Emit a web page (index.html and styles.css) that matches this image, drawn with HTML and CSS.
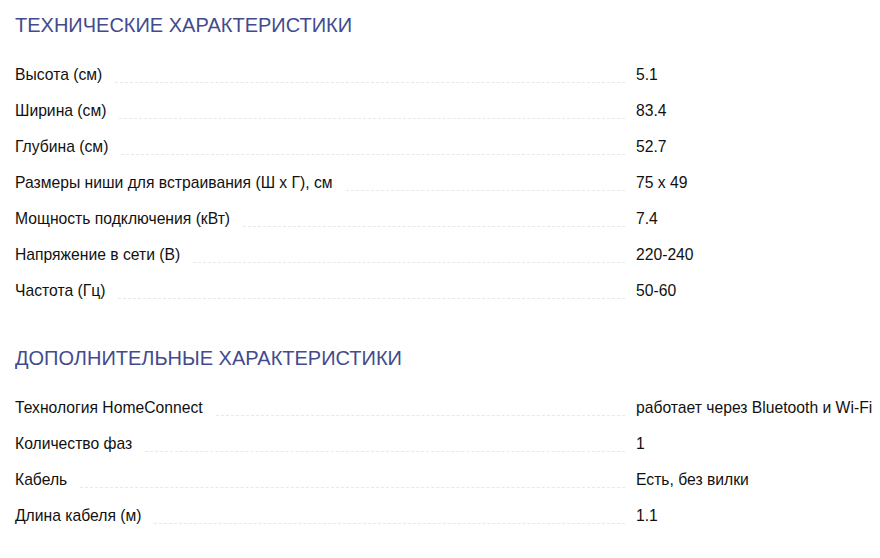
FILE: index.html
```html
<!DOCTYPE html>
<html lang="ru">
<head>
<meta charset="utf-8">
<title>Характеристики</title>
<link rel="stylesheet" href="styles.css">
</head>
<body>
<section class="specs">
  <h2 class="specs-title">ТЕХНИЧЕСКИЕ ХАРАКТЕРИСТИКИ</h2>
  <div class="spec-row"><span class="spec-label">Высота (см)</span><span class="spec-leader"></span><span class="spec-value">5.1</span></div>
  <div class="spec-row"><span class="spec-label">Ширина (см)</span><span class="spec-leader"></span><span class="spec-value">83.4</span></div>
  <div class="spec-row"><span class="spec-label">Глубина (см)</span><span class="spec-leader"></span><span class="spec-value">52.7</span></div>
  <div class="spec-row"><span class="spec-label">Размеры ниши для встраивания (Ш x Г), см</span><span class="spec-leader"></span><span class="spec-value">75 x 49</span></div>
  <div class="spec-row"><span class="spec-label">Мощность подключения (кВт)</span><span class="spec-leader"></span><span class="spec-value">7.4</span></div>
  <div class="spec-row"><span class="spec-label">Напряжение в сети (В)</span><span class="spec-leader"></span><span class="spec-value">220-240</span></div>
  <div class="spec-row"><span class="spec-label">Частота (Гц)</span><span class="spec-leader"></span><span class="spec-value">50-60</span></div>
</section>
<section class="specs specs-extra">
  <h2 class="specs-title">ДОПОЛНИТЕЛЬНЫЕ ХАРАКТЕРИСТИКИ</h2>
  <div class="spec-row"><span class="spec-label">Технология HomeConnect</span><span class="spec-leader"></span><span class="spec-value">работает через Bluetooth и Wi-Fi</span></div>
  <div class="spec-row"><span class="spec-label">Количество фаз</span><span class="spec-leader"></span><span class="spec-value">1</span></div>
  <div class="spec-row"><span class="spec-label">Кабель</span><span class="spec-leader"></span><span class="spec-value">Есть, без вилки</span></div>
  <div class="spec-row"><span class="spec-label">Длина кабеля (м)</span><span class="spec-leader"></span><span class="spec-value">1.1</span></div>
</section>
</body>
</html>
```
FILE: styles.css
```css
html, body {
  margin: 0;
  padding: 0;
  background: #ffffff;
}

body {
  font-family: "Liberation Sans", Arial, sans-serif;
  color: #111111;
  padding: 13px 0 0 15px;
  overflow: hidden;
}

.specs-title {
  margin: 0 0 20px 0;
  font-size: 20px;
  line-height: 24px;
  font-weight: normal;
  color: #434a8e;
}

.specs-extra {
  margin-top: 37px;
}

.spec-row {
  display: flex;
  height: 36px;
  line-height: 36px;
  font-size: 15.7px;
}

.spec-label {
  flex: 0 0 auto;
  white-space: nowrap;
}

.spec-leader {
  flex: 1 1 auto;
  border-bottom: 1px dashed #e8e8e8;
  margin: 0 11px 10px 13px;
}

.spec-value {
  flex: 0 0 244px;
  white-space: nowrap;
}
```
